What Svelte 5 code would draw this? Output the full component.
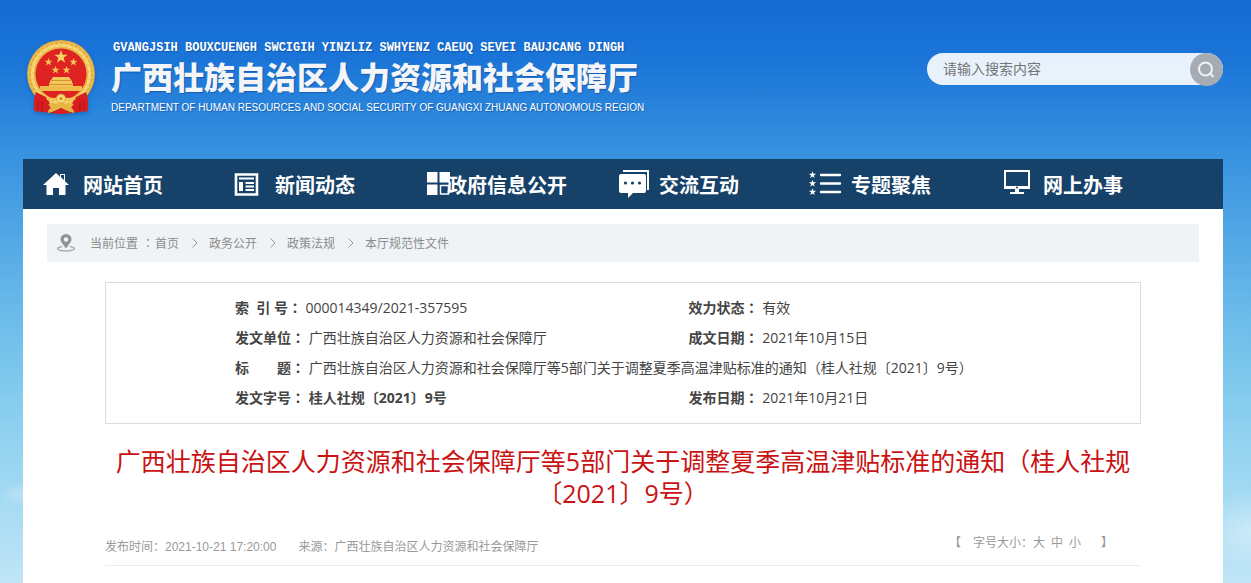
<script lang="ts">
  type Row = { label: string; value: string; bold?: boolean };

  const navItems = [
    { icon: 'home', text: '网站首页' },
    { icon: 'news', text: '新闻动态' },
    { icon: 'grid', text: '政府信息公开' },
    { icon: 'chat', text: '交流互动' },
    { icon: 'list', text: '专题聚焦' },
    { icon: 'screen', text: '网上办事' },
  ];

  const crumbs = ['首页', '政务公开', '政策法规', '本厅规范性文件'];

  const title =
    '广西壮族自治区人力资源和社会保障厅等5部门关于调整夏季高温津贴标准的通知（桂人社规〔2021〕9号）';

  const rows: Row[][] = [
    [
      { label: '索\u00a0 引 号', value: '000014349/2021-357595' },
      { label: '效力状态', value: '有效' },
    ],
    [
      { label: '发文单位', value: '广西壮族自治区人力资源和社会保障厅' },
      { label: '成文日期', value: '2021年10月15日' },
    ],
    [{ label: '标\u3000\u3000题', value: title }],
    [
      { label: '发文字号', value: '桂人社规〔2021〕9号', bold: true },
      { label: '发布日期', value: '2021年10月21日' },
    ],
  ];

  const sizes = [
    { name: '大', px: 18 },
    { name: '中', px: 16 },
    { name: '小', px: 14 },
  ];

  // 五角星顶点
  function star(cx: number, cy: number, r: number) {
    return Array.from({ length: 10 }, (_, i) => {
      const a = (Math.PI / 5) * i - Math.PI / 2;
      const d = i % 2 ? r * 0.4 : r;
      return `${(cx + d * Math.cos(a)).toFixed(2)},${(cy + d * Math.sin(a)).toFixed(2)}`;
    }).join(' ');
  }

  let keyword = $state('');
  let size = $state(16);
</script>

<div class="page">
  <header class="header">
    <a class="brand" href="/" aria-label="广西壮族自治区人力资源和社会保障厅">
      <svg class="emblem" viewBox="0 0 70 75" aria-hidden="true">
        <defs>
          <radialGradient id="gold" cx="50%" cy="50%" r="50%">
            <stop offset="72%" stop-color="#dda231" />
            <stop offset="86%" stop-color="#f6d46c" />
            <stop offset="100%" stop-color="#e2a93a" />
          </radialGradient>
        </defs>
        <circle cx="35" cy="34" r="34" fill="url(#gold)" />
        <circle cx="35" cy="34" r="31" fill="none" stroke="#cc9130" stroke-width=".8" stroke-dasharray="3 2" />
        <circle cx="35" cy="34" r="28" fill="none" stroke="#fbe391" stroke-width="1" stroke-dasharray="4 2" />
        <circle cx="35" cy="34" r="25.500" fill="#df2222" />
        <polygon points={star(35, 17, 7)} fill="#f8d264" />
        <polygon points={star(22.5, 22, 4.2)} fill="#f3c654" />
        <polygon points={star(47.5, 22, 4.2)} fill="#f3c654" />
        <polygon points={star(29.5, 30, 4.2)} fill="#f3c654" />
        <polygon points={star(40.5, 30, 4.2)} fill="#f3c654" />
        <path
          d="M27 37h16l2 3h-20zM24 40h22v4h-22zM23 43h24v3h9v5H14v-5h9z"
          fill="#f3c75c"
        />
        <path d="M24 40.500h22M23 44.500h24" stroke="#c07a1c" stroke-width=".7" />
        <path d="M14 46h42v5H14z" fill="#eebb4c" />
        <path d="M18 52h34l-5 7-12-5-12 5z" fill="#df2222" />
        <path d="M10 52l12 6 4 15-9-1-9-1V59z" fill="#d81e1e" />
        <path d="M60 52l-12 6-4 15 9-1 9-1V59z" fill="#d81e1e" />
        <path d="M12 61v9M16 62v9M58 61v9M54 62v9" stroke="#a31212" fill="none" />
        <path d="M19 54q7 6 12 3l4-3 4 3q5 3 12-3l-2 6q-6 3-11 1l-3 3-3-3q-5 2-11-1z" fill="#f1c254" />
        <path d="M22 64q6 1 13-2 7 3 13 2l-3 4q3 1 3 5-7-1-13-5-6 4-13 5 0-4 3-5z" fill="#e9b541" />
        <circle cx="35" cy="58.500" r="4.500" fill="#f8d977" stroke="#c58a28" stroke-dasharray="1 1" />
        <circle cx="35" cy="58.500" r="1.500" fill="#c88a20" />
        <path d="M24 73l11-5 11 5-11 1z" fill="#d81e1e" />
      </svg>
      <span class="brand-text">
        <span class="brand-za">GVANGJSIH BOUXCUENGH SWCIGIH YINZLIZ SWHYENZ CAEUQ SEVEI BAUJCANG DINGH</span>
        <span class="brand-zh">广西壮族自治区人力资源和社会保障厅</span>
        <span class="brand-en">DEPARTMENT OF HUMAN RESOURCES AND SOCIAL SECURITY OF GUANGXI ZHUANG AUTONOMOUS REGION</span>
      </span>
    </a>

    <form class="search" onsubmit={(e) => e.preventDefault()}>
      <input type="text" placeholder="请输入搜索内容" aria-label="请输入搜索内容" bind:value={keyword} />
      <button type="submit" aria-label="搜索">
        <svg viewBox="0 0 33 33" aria-hidden="true">
          <circle cx="15.500" cy="16" r="6.500" />
          <path d="M20 20.500l3 3" />
        </svg>
      </button>
    </form>
  </header>

  <nav class="nav">
    {#each navItems as item}
      <a href="/">
        <svg class="nav-icon" viewBox="0 0 32 32" aria-hidden="true">
          {#if item.icon === 'home'}
            <path d="M13 5L0 17h3.500v10H10v-7h6v7h6.500V17H26L22 13.300V6h-5v2.700z" fill="#fff" />
            <path d="M18 7h3v5l-3-2.700z" fill="#164168" />
          {:else if item.icon === 'news'}
            <path d="M1 6.500h21v20H1z" fill="none" stroke="#fff" stroke-width="2.600" />
            <path d="M4 10.500h15M10.500 15h8.500M10.500 18.500h8.500M10.500 22h8.500" stroke="#fff" stroke-width="1.800" />
            <path d="M4 14h4v9H4z" fill="#fff" />
          {:else if item.icon === 'grid'}
            <path d="M0 4h10.500v10.500H0zM12.500 4H23v10.500H12.500zM0 16.500h10.500V27H0z" fill="#fff" />
            <path d="M13.500 17.500h8v8.500h-8z" fill="none" stroke="#fff" stroke-width="1.500" />
          {:else if item.icon === 'chat'}
            <path d="M4 3h25v19" fill="none" stroke="#fff" stroke-width="2" />
            <path d="M2 6h23q2 0 2 2v15q0 2-2 2H14l-5 5v-5H2q-2 0-2-2V8q0-2 2-2z" fill="#fff" />
            <g fill="#164168">
              <circle cx="6.500" cy="15" r="1.600" />
              <circle cx="13.500" cy="15" r="1.600" />
              <circle cx="20.500" cy="15" r="1.600" />
            </g>
          {:else if item.icon === 'list'}
            <g fill="#fff">
              <polygon points={star(1.5, 7, 3.8)} />
              <polygon points={star(1.5, 15.5, 3.8)} />
              <polygon points={star(1.5, 24, 3.8)} />
            </g>
            <path d="M10 7h19M10 15.500h19M10 24h19" stroke="#fff" stroke-width="2.400" stroke-linecap="round" />
          {:else}
            <path d="M2 3h24v17H2z" fill="none" stroke="#fff" stroke-width="2" />
            <path d="M1 18h26v3H1zM12 21h4v3h5v2H7v-2h5z" fill="#fff" />
            <circle cx="14" cy="19.500" r="1" fill="#164168" />
          {/if}
        </svg>
        {item.text}
      </a>
    {/each}
  </nav>

  <main class="content">
    <div class="crumbs">
      <svg class="pin" viewBox="0 0 18 18" aria-hidden="true">
        <path d="M5 12.500c-8 1.500-4 4.500 4 4.500s12-3 4-4.500" fill="none" stroke="#a9a9a9" stroke-width="1.400" />
        <path d="M9 14.500C6 10 3.500 8 3.500 5.300a5.500 5.300 0 0 1 11 0C14.500 8 12 10 9 14.500z" fill="#929292" />
        <circle cx="9" cy="5.500" r="2.300" fill="#eff3f6" />
      </svg>
      <span class="crumbs-label">当前位置<span class="colon">：</span></span>
      {#each crumbs as crumb, i}
        {#if i > 0}
          <svg class="arrow" viewBox="0 0 6 10" aria-hidden="true"><path d="M.5.5L5 5 .5 9.500" /></svg>
        {/if}
        <a href="/">{crumb}</a>
      {/each}
    </div>

    <article class="article">
      <div class="info">
        <table>
          <tbody>
            {#each rows as row}
              <tr>
                {#each row as cell}
                  <td colspan={row.length === 1 ? 2 : 1}>
                    <b>{cell.label}<span class="colon">：</span></b>
                    <span class:bold={cell.bold}>{cell.value}</span>
                  </td>
                {/each}
              </tr>
            {/each}
          </tbody>
        </table>
      </div>

      <h1>{title}</h1>

      <div class="meta">
        <p class="source">
          <span>发布时间：2021-10-21 17:20:00</span>
          <span>来源：广西壮族自治区人力资源和社会保障厅</span>
        </p>
        <div class="font-size">
          <span>【</span>
          <span class="font-size-options">
            字号大小：
            {#each sizes as s}
              <button type="button" aria-pressed={size === s.px} onclick={() => (size = s.px)}>{s.name}</button>
            {/each}
          </span>
          <span>】</span>
        </div>
      </div>
    </article>
  </main>
</div>

<style>
  :global(body) {
    background:
      radial-gradient(ellipse 50px 40px at 100% 530px, rgba(255, 255, 255, 0.35), transparent),
      radial-gradient(ellipse 20px 12px at 20px 494px, rgba(255, 255, 255, 0.25), transparent),
      linear-gradient(
        #146cd4 0,
        #1b75d8 60px,
        #2b86dc 115px,
        #3892e0 155px,
        #5aaee7 260px,
        #7fc9ed 380px,
        #98d5f1 460px,
        #c0e5f7 583px
      );
    font-family: 'Open Sans', 'Noto Sans CJK SC', sans-serif;
    color: #444;
  }

  a {
    color: inherit;
    text-decoration: none;
  }

  .page {
    display: flex;
    flex-direction: column;
    max-width: 1200px;
    min-height: 100vh;
    margin: 0 auto;
    padding: 0 28px 0 23px;
  }

  .header {
    display: flex;
    justify-content: space-between;
    align-items: flex-start;
    height: 119px;
    padding-top: 40px;
  }

  .brand {
    display: flex;
    gap: 15px;
    padding-left: 3px;
    color: #fff;
  }

  .emblem {
    width: 70px;
    height: 75px;
    filter: drop-shadow(0 2px 2px rgba(0, 40, 110, 0.3));
  }

  .brand-text {
    display: flex;
    flex-direction: column;
    white-space: nowrap;
    text-shadow: 1px 1px 1px rgba(0, 40, 110, 0.4);
  }

  .brand-za {
    padding-left: 2px;
    font: bold 12px/16px 'Liberation Mono', monospace;
  }

  .brand-zh {
    font-size: 31px;
    font-weight: 900;
    line-height: 42px;
    color: #f3f5f8;
  }

  .brand-en {
    font: 10px/20px 'Liberation Sans', Arial, sans-serif;
  }

  .search {
    display: flex;
    width: 296px;
    height: 32px;
    margin-top: 13px;
    border-radius: 16px;
    background: rgba(255, 255, 255, 0.9);
  }

  .search input {
    flex: 1;
    min-width: 0;
    padding: 0 16px;
    border: 0;
    outline: 0;
    background: none;
    font: 14px/20px 'Open Sans', 'Noto Sans CJK SC', sans-serif;
  }

  .search input::placeholder {
    color: #757575;
  }

  .search button {
    width: 33px;
    height: 33px;
    padding: 0;
    border: 0;
    border-radius: 50%;
    background: #a6acb3;
    cursor: pointer;
  }

  .search button svg {
    display: block;
    fill: none;
    stroke: #f2f4f6;
    stroke-width: 2;
    stroke-linecap: round;
  }

  .nav {
    display: grid;
    grid-template-columns: repeat(6, 1fr);
    padding: 0 44px 0 4px;
    background: #164168;
  }

  .nav a {
    position: relative;
    padding-top: 4px;
    font-size: 20px;
    font-weight: bold;
    line-height: 46px;
    text-align: center;
    color: #fff;
  }

  .nav-icon {
    position: absolute;
    top: 9px;
    left: 16px;
    width: 32px;
    height: 32px;
    overflow: visible;
  }

  .content {
    flex: 1;
    padding: 15px 24px 0;
    background: #fff;
  }

  .crumbs {
    display: flex;
    align-items: center;
    height: 38px;
    padding-left: 10px;
    background: #eff3f6;
    font-size: 12px;
    color: #8c8c8c;
  }

  .pin {
    width: 18px;
    height: 18px;
    margin-right: 15px;
  }

  .crumbs-label {
    display: flex;
    align-items: center;
    gap: 4px;
    margin-right: 1px;
  }

  .colon {
    font-family: 'Noto Sans CJK TC', sans-serif;
    line-height: 1;
  }

  .arrow {
    width: 6px;
    height: 10px;
    margin: 0 11px 0 13px;
    fill: none;
    stroke: #999;
  }

  .article {
    padding: 20px 58px 0;
  }

  .info {
    padding: 10px 0 10px 127px;
    border: 1px solid #dcdcdc;
  }

  table {
    width: 100%;
    border-collapse: collapse;
    table-layout: fixed;
    font-size: 14px;
    line-height: 30px;
  }

  td {
    height: 30px;
    padding: 0 0 0 2px;
    white-space: nowrap;
  }

  .bold {
    font-weight: bold;
  }

  h1 {
    margin: 21px 0 0;
    font-size: 25px;
    font-weight: normal;
    line-height: 32px;
    text-align: center;
    color: #c91313;
  }

  .meta {
    display: flex;
    justify-content: space-between;
    margin-top: 24px;
    padding-bottom: 8px;
    border-bottom: 1px solid #ececec;
    font: 12px/20px 'Liberation Sans', 'Noto Sans CJK SC', sans-serif;
    color: #999;
  }

  .source {
    display: flex;
    gap: 22px;
    margin: 4px 0 0;
  }

  .font-size {
    display: flex;
    gap: 12px;
    padding-right: 28px;
  }

  .font-size-options {
    display: flex;
    align-items: baseline;
    margin-right: 2px;
  }

  .font-size button {
    margin-right: 6px;
    padding: 0;
    border: 0;
    background: none;
    font: inherit;
    color: inherit;
    cursor: pointer;
  }
</style>
